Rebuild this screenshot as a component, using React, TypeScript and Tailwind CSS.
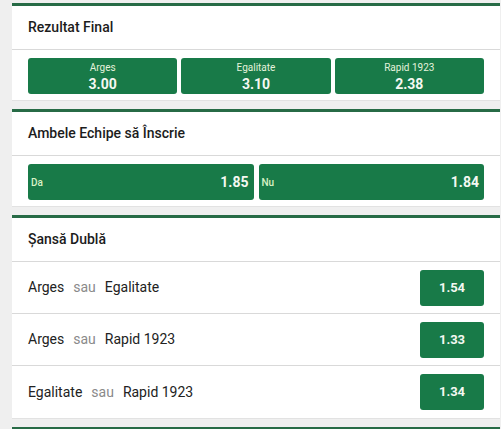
const font = { fontFamily: 'Roboto, "Noto Sans", sans-serif' };

function Card({ title, children }: { title: string; children: React.ReactNode }) {
  return (
    <section className="bg-white border-t-[3px] border-[#276b46] border-b border-b-[#e2e2e2] mb-2">
      <div className="h-[44px] flex items-center px-4 border-b border-[#d9d9d9]">
        <h2 className="text-[14px] font-medium text-[#1c1c1c]">{title}</h2>
      </div>
      {children}
    </section>
  );
}

export default function App() {
  const finals = [
    { label: "Arges", odd: "3.00" },
    { label: "Egalitate", odd: "3.10" },
    { label: "Rapid 1923", odd: "2.38" },
  ];
  const both = [
    { label: "Da", odd: "1.85" },
    { label: "Nu", odd: "1.84" },
  ];
  const doubles = [
    { a: "Arges", b: "Egalitate", odd: "1.54" },
    { a: "Arges", b: "Rapid 1923", odd: "1.33" },
    { a: "Egalitate", b: "Rapid 1923", odd: "1.34" },
  ];

  return (
    <div className="min-h-screen bg-[#efefef] pl-3 pr-px pt-[3px]" style={font}>
      {/* Rezultat Final */}
      <Card title="Rezultat Final">
        <div className="px-4 pt-2 pb-[6px] grid grid-cols-3 gap-1">
          {finals.map((f) => (
            <button
              key={f.label}
              className="h-9 rounded-[3px] bg-[#187a48] flex flex-col items-center justify-start pt-[4px]"
            >
              <span className="text-[10px] leading-[12px] text-[#e4f3dc]">{f.label}</span>
              <span className="text-[14px] leading-[18px] mt-px font-bold text-[#f4f8f2]">{f.odd}</span>
            </button>
          ))}
        </div>
      </Card>

      {/* Ambele Echipe */}
      <Card title="Ambele Echipe să Înscrie">
        <div className="px-4 pt-2 pb-[6px] grid grid-cols-2 gap-[5px]">
          {both.map((b) => (
            <button
              key={b.label}
              className="h-9 rounded-[3px] bg-[#187a48] flex items-center justify-between pl-[3px] pr-[5px]"
            >
              <span className="text-[10px] font-medium text-[#d8f2c6]">{b.label}</span>
              <span className="text-[14px] font-bold text-[#f4f8f2]">{b.odd}</span>
            </button>
          ))}
        </div>
      </Card>

      {/* Sansa Dubla */}
      <Card title="Șansă Dublă">
        {doubles.map((d, i) => (
          <div
            key={i}
            className={
              "h-[52px] flex items-center justify-between pl-4 pr-4 " +
              (i < doubles.length - 1 ? "border-b border-[#d9d9d9]" : "")
            }
          >
            <div className="flex items-center gap-[9px] text-[14px] text-[#222]">
              <span>{d.a}</span>
              <span className="text-[#8a8a8a]">sau</span>
              <span>{d.b}</span>
            </div>
            <button className="w-16 h-9 rounded-[3px] bg-[#187a48] text-[13px] font-bold text-[#f4f8f2]">
              {d.odd}
            </button>
          </div>
        ))}
      </Card>

      {/* next market, cut off */}
      <section className="bg-white border-t-[3px] border-[#276b46] h-10" />
    </div>
  );
}
